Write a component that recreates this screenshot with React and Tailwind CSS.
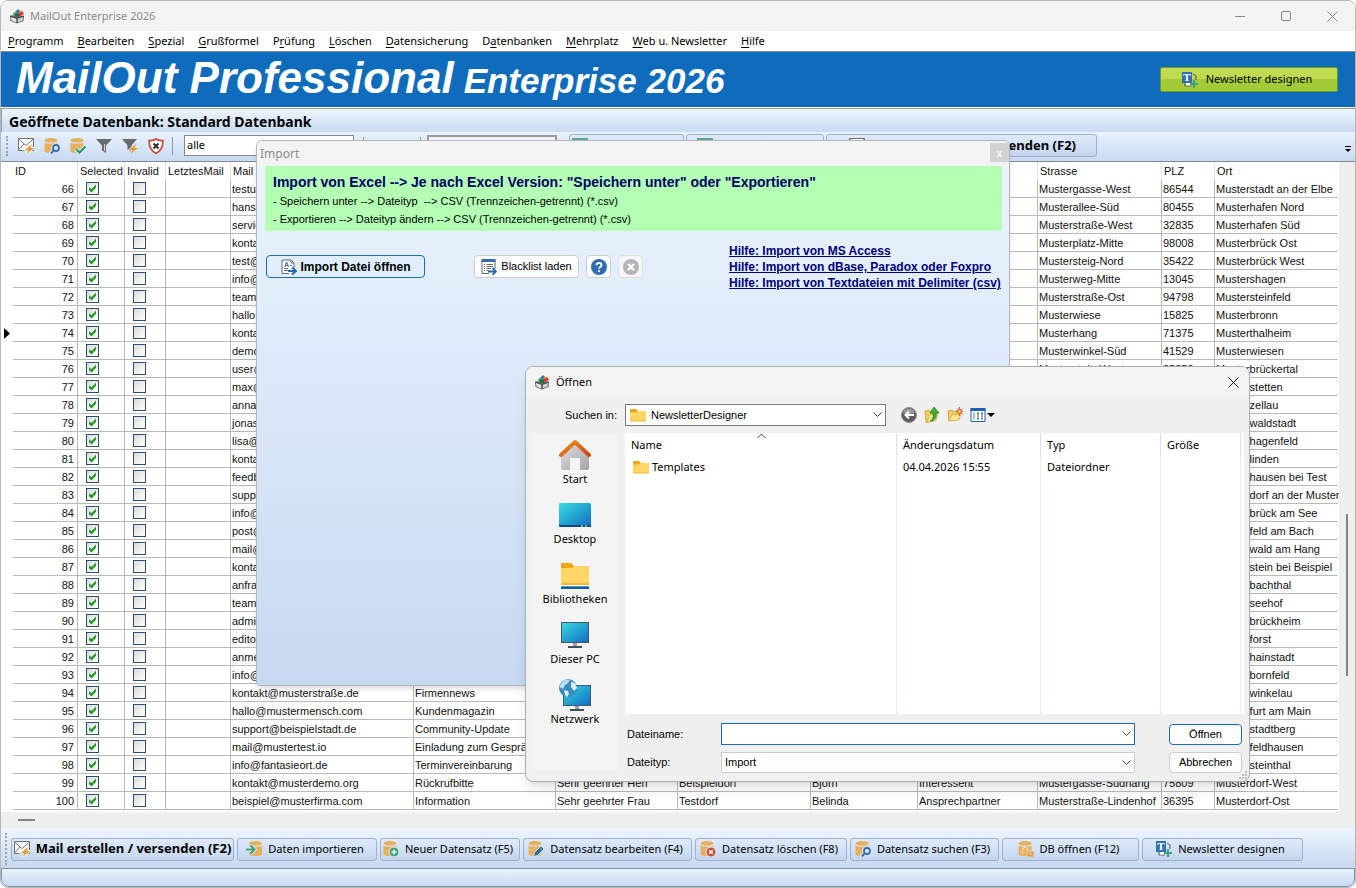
import { useState } from "react"
import clsx from "clsx"

// [text before the mnemonic, mnemonic, rest]
const menuItems = [
  ["", "P", "rogramm"],
  ["", "B", "earbeiten"],
  ["", "S", "pezial"],
  ["", "G", "rußformel"],
  ["P", "r", "üfung"],
  ["", "L", "öschen"],
  ["", "D", "atensicherung"],
  ["D", "a", "tenbanken"],
  ["", "M", "ehrplatz"],
  ["", "W", "eb u. Newsletter"],
  ["", "H", "ilfe"],
]

const columns = ["ID", "Selected", "Invalid", "LetztesMail", "Mail", "Betreff", "Anrede", "Firma", "Vorname", "Position", "Strasse", "PLZ", "Ort"]

const records = [
  { id: 66, mail: "testuser@muster.de", street: "Mustergasse-West", zip: "86544", city: "Musterstadt an der Elbe" },
  { id: 67, mail: "hans@muster.de", street: "Musterallee-Süd", zip: "80455", city: "Musterhafen Nord" },
  { id: 68, mail: "service@muster.de", street: "Musterstraße-West", zip: "32835", city: "Musterhafen Süd" },
  { id: 69, mail: "kontakt@muster.de", street: "Musterplatz-Mitte", zip: "98008", city: "Musterbrück Ost" },
  { id: 70, mail: "test@muster.de", street: "Mustersteig-Nord", zip: "35422", city: "Musterbrück West" },
  { id: 71, mail: "info@muster.de", street: "Musterweg-Mitte", zip: "13045", city: "Mustershagen" },
  { id: 72, mail: "team@muster.de", street: "Musterstraße-Ost", zip: "94798", city: "Mustersteinfeld" },
  { id: 73, mail: "hallo@muster.de", street: "Musterwiese", zip: "15825", city: "Musterbronn" },
  { id: 74, mail: "kontakt@muster.de", street: "Musterhang", zip: "71375", city: "Musterthalheim" },
  { id: 75, mail: "demo@muster.de", street: "Musterwinkel-Süd", zip: "41529", city: "Musterwiesen" },
  { id: 76, mail: "user@muster.de", street: "Mustersteig-West", zip: "85353", city: "Musterbrückertal" },
  { id: 77, mail: "max@muster.de", city: "Musterstetten" },
  { id: 78, mail: "anna@muster.de", city: "Musterzellau" },
  { id: 79, mail: "jonas@muster.de", city: "Musterwaldstadt" },
  { id: 80, mail: "lisa@muster.de", city: "Musterhagenfeld" },
  { id: 81, mail: "kontakt@muster.de", city: "Musterlinden" },
  { id: 82, mail: "feedback@muster.de", city: "Musterhausen bei Test" },
  { id: 83, mail: "support@muster.de", city: "Musterdorf an der Muster" },
  { id: 84, mail: "info@muster.de", city: "Musterbrück am See" },
  { id: 85, mail: "post@muster.de", city: "Musterfeld am Bach" },
  { id: 86, mail: "mail@muster.de", city: "Musterwald am Hang" },
  { id: 87, mail: "kontakt@muster.de", city: "Musterstein bei Beispiel" },
  { id: 88, mail: "anfrage@muster.de", city: "Musterbachthal" },
  { id: 89, mail: "team@muster.de", city: "Musterseehof" },
  { id: 90, mail: "admin@muster.de", city: "Musterbrückheim" },
  { id: 91, mail: "editor@muster.de", city: "Musterforst" },
  { id: 92, mail: "anmeldung@muster.de", city: "Musterhainstadt" },
  { id: 93, mail: "info@muster.de", city: "Musterbornfeld" },
  { id: 94, mail: "kontakt@musterstraße.de", subject: "Firmennews", city: "Musterwinkelau" },
  { id: 95, mail: "hallo@mustermensch.com", subject: "Kundenmagazin", city: "Musterfurt am Main" },
  { id: 96, mail: "support@beispielstadt.de", subject: "Community-Update", city: "Musterstadtberg" },
  { id: 97, mail: "mail@mustertest.io", subject: "Einladung zum Gespräch", city: "Musterfeldhausen" },
  { id: 98, mail: "info@fantasieort.de", subject: "Terminvereinbarung", city: "Mustersteinthal" },
  { id: 99, mail: "kontakt@musterdemo.org", subject: "Rückrufbitte", salutation: "Sehr geehrter Herr", company: "Beispieldorf", firstName: "Björn", position: "Interessent", street: "Mustergasse-Südhang", zip: "75809", city: "Musterdorf-West" },
  { id: 100, mail: "beispiel@musterfirma.com", subject: "Information", salutation: "Sehr geehrter Frau", company: "Testdorf", firstName: "Belinda", position: "Ansprechpartner", street: "Musterstraße-Lindenhof", zip: "36395", city: "Musterdorf-Ost" },
]

const currentRecord = 74

/* ---------- Icons ---------- */

function Svg({ size = 16, children }) {
  return (
    <svg width={size} height={size} viewBox={`0 0 ${size} ${size}`} fill="none" className="shrink-0" aria-hidden="true">
      {children}
    </svg>
  )
}

function BoxIcon() {
  return (
    <Svg>
      <path d="M6 4 9 1l2 2-3 4z" fill="#2b7bb9" />
      <path d="M4 5l3-1 1 3-3 1z" fill="#3aa655" />
      <path d="M9 5l4-2 2 3-5 3z" fill="#d8392b" />
      <path d="M10 2l3 1-2 2z" fill="#e8a427" />
      <path d="M6 6h4v3H6z" fill="#1d6b37" />
      <path d="M1 8l3-1 4 2.500 4-2 3 .5-.5 5L8 15.500 1.500 13z" fill="#6d6d6d" />
      <path d="M2 9l5.500 1.800v3.600L2.500 12.500z" fill="#e4e4e4" />
      <path d="M14 9l-5.500 1.800v3.600l5-1.900z" fill="#cfcfcf" />
      <path d="M1 8l7 2.200L15 8" stroke="#444" />
      <path d="M8 10v5" stroke="#444" />
    </Svg>
  )
}

const bolt = <path d="M14 6 7 12h3.500l-2.500 4.500 8-6.500h-3.500z" fill="#e59a2c" />

function MailBoltIcon() {
  return (
    <Svg>
      <path d="M.5 .5h15v12H.5z" fill="#fff" stroke="#707070" />
      <path d="M.5 1 8 7.500 15.500 1M.5 12l5.500-6" stroke="#707070" />
      <path d="M14 6 7 12h3.500l-2.500 4.500 8-6.500h-3.500z" stroke="#fff" strokeWidth="1.500" />
      {bolt}
    </Svg>
  )
}

function Database({ children }) {
  return (
    <Svg>
      <ellipse cx="7" cy="2.300" rx="6.500" ry="2.300" fill="#e6b05c" />
      <path d="M.5 4.500c2 1.600 11 1.600 13 0v9c-2 2-11 2-13 0z" fill="#e6b05c" />
      {children}
    </Svg>
  )
}

const DbSearchIcon = () => (
  <Database>
    <circle cx="11.500" cy="10" r="4.500" fill="#dfeafa" />
    <path d="M6 16l3-3" stroke="#dfeafa" strokeWidth="4" />
    <circle cx="12" cy="10" r="3" stroke="#356fb0" strokeWidth="1.800" />
    <path d="M9.800 12.200 7 15.500" stroke="#356fb0" strokeWidth="2" />
  </Database>
)

const DbCheckIcon = () => (
  <Database>
    <path d="M5.500 11l4 3.500L16 8" stroke="#dfeafa" strokeWidth="4.500" />
    <path d="M6 11l3.500 3.500L15.500 8.500" stroke="#259a63" strokeWidth="2.200" />
  </Database>
)

const DbImportIcon = () => (
  <Svg>
    <ellipse cx="9.500" cy="2.300" rx="6.500" ry="2.300" fill="#e6b05c" />
    <path d="M3 4.500c2 1.600 11 1.600 13 0v9c-2 2-11 2-13 0z" fill="#e6b05c" />
    <path d="M0 8.500h8M4.500 4.500l4 4-4 4" stroke="#dbe7f6" strokeWidth="4" />
    <path d="M0 8.500h8M4.500 4.500l4 4-4 4" stroke="#3fa37c" strokeWidth="2.200" />
  </Svg>
)

const DbAddIcon = () => (
  <Database>
    <circle cx="11" cy="11" r="5" fill="#3fa37c" stroke="#e6effa" />
    <path d="M11 8.500v5M8.500 11h5" stroke="#fff" strokeWidth="1.500" />
  </Database>
)

const DbEditIcon = () => (
  <Database>
    <path d="M5.500 15.500l1-4L13 5l3 3-6.500 6.500z" fill="#346ca8" stroke="#e6effa" strokeWidth=".8" />
    <path d="M12 7l2.500 2.500" stroke="#9cc0e4" strokeWidth=".7" />
  </Database>
)

const DbDeleteIcon = () => (
  <Database>
    <circle cx="11" cy="11" r="5" fill="#cf4a38" stroke="#e6effa" />
    <path d="M9.200 9.200l3.600 3.600M12.800 9.200l-3.600 3.600" stroke="#fff" strokeWidth="1.500" />
  </Database>
)

const DbOpenIcon = () => (
  <Database>
    <path d="M4.500 13V9a2.500 2.500 0 0 1 5 0v1" stroke="#f6ddb4" strokeWidth="1.200" />
    <path d="M9 10h7v6H9z" fill="#ee9a4d" stroke="#e6effa" strokeWidth=".6" />
    <path d="M12.500 11.500v2.500" stroke="#fff" />
  </Database>
)

const FunnelIcon = () => (
  <Svg>
    <path d="M0 1h16l-6 6.500V15L6 12.500v-5z" fill="#6b6b6b" />
    <path d="M8.500 6v7" stroke="#d5d5d5" />
  </Svg>
)

const FunnelBoltIcon = () => (
  <Svg>
    <path d="M0 1h15L9.500 7.500V14L5.500 12V7.500z" fill="#6b6b6b" />
    <path d="M14 6 7 12h3.500l-2.500 4.500 8-6.500h-3.500z" stroke="#dfeafa" strokeWidth="1.500" />
    {bolt}
  </Svg>
)

const ShieldIcon = () => (
  <Svg>
    <path d="M8 1c2 1.400 4.500 1.700 6.800 1.500C15.200 9 13 13 8 15.300 3 13 .8 9 1.200 2.500 3.500 2.700 6 2.400 8 1z" fill="#fff" stroke="#cf4a38" strokeWidth="1.700" />
    <path d="M5.500 5.500l5 5M10.500 5.500l-5 5" stroke="#2e2e2e" strokeWidth="2" />
  </Svg>
)

const NewsletterIcon = () => (
  <Svg>
    <path d="M3 11v3h6M11 2l3 2v4" stroke="#555" />
    <path d="M4 11h4v2.500H4z" fill="#fff" />
    <path d="M0 0h10v11H0z" fill="#356fb0" />
    <text x="5" y="9" textAnchor="middle" fill="#fff" fontSize="11" fontWeight="700" fontFamily="Liberation Serif, serif">T</text>
    <path d="M12 8v8M8 12h8" stroke="#3fa37c" strokeWidth="2.200" />
  </Svg>
)

const ImportFileIcon = () => (
  <Svg>
    <path d="M8 14.500H1V1h9l3 3v5" fill="#fff" stroke="#6b6b6b" />
    <path d="M10 1v3h3M3 9.500h4M3 11.500h4M9 6.500h2" stroke="#6b6b6b" />
    <text x="5.500" y="8" textAnchor="middle" fill="#356fb0" fontSize="7" fontWeight="700" fontFamily="Liberation Sans, sans-serif">A</text>
    <path d="M7 12h7M11 8.500l4 3.500-4 3.500" stroke="#2c6bb0" strokeWidth="2" />
  </Svg>
)

const BlacklistIcon = () => (
  <Svg>
    <path d="M1 1h13v9M8 14.500H1V1" fill="#fff" stroke="#6b6b6b" />
    <path d="M.5 0h14v3H.5z" fill="#356fb0" />
    <path d="M3 5.500h1M3 7.500h1M3 9.500h1M3 11.500h1M5.500 5.500H12M5.500 7.500H12M5.500 9.500H10M5.500 11.500H8" stroke="#6b6b6b" />
    <path d="M7 12.500h7M11.500 9l3.500 3.500-3.500 3.500" stroke="#2c6bb0" strokeWidth="1.800" />
  </Svg>
)

const HelpIcon = () => (
  <Svg>
    <circle cx="8" cy="8" r="8" fill="#2f6db0" />
    <path d="M5.500 6.200c0-3.200 5-3.200 5 0 0 1.900-2.400 1.800-2.400 3.600M8 11.200v1.800" stroke="#fff" strokeWidth="1.800" />
  </Svg>
)

const CancelIcon = () => (
  <Svg>
    <circle cx="8" cy="8" r="8" fill="#b5b5b5" />
    <path d="M5 5l6 6M11 5l-6 6" stroke="#fff" strokeWidth="2.400" />
  </Svg>
)

const FolderIcon = () => (
  <Svg>
    <path d="M0 3c0-.6.400-1 1-1h5l2 2h7c.6 0 1 .400 1 1v3H0z" fill="#e9a90f" />
    <path d="M0 5.500h6L8 4h7.200c.5 0 .8.300.8.800V13c0 .6-.4 1-1 1H1c-.6 0-1-.4-1-1z" fill="#ffd566" />
    <path d="M0 13c0 .6.400 1 1 1h14c.6 0 1-.4 1-1" stroke="#eeb530" />
  </Svg>
)

const BackIcon = () => (
  <Svg>
    <circle cx="8" cy="8" r="7.500" fill="#5d5d5d" stroke="#8f8f8f" />
    <path d="M2 6a6.300 6.300 0 0 1 12 0c-3 1.500-9 1.500-12 0z" fill="#9a9a9a" />
    <path d="M13 8H4.500M8 4.500 4.500 8 8 11.500" stroke="#fff" strokeWidth="2" />
  </Svg>
)

const UpIcon = () => (
  <Svg>
    <path d="M1 4l4-1 1 1.500 6-.5v9L2 15.500z" fill="#f0cf60" stroke="#c99a2e" strokeWidth=".8" />
    <path d="M3 15.500 5.500 8 14 6.500l-2 7z" fill="#fbe694" stroke="#c99a2e" strokeWidth=".6" />
    <path d="M6 14c3-1 3.500-4 3-8H6l4-6 5 6h-3c1 5-2 8-6 8z" fill="#3db12f" stroke="#1c7a1a" strokeWidth=".7" />
  </Svg>
)

const NewFolderIcon = () => (
  <Svg>
    <path d="M1 4l4-1 1.500 1.500L12 4v8L2 14z" fill="#f0cf60" stroke="#c99a2e" strokeWidth=".8" />
    <path d="M2 14 4.500 8 14 7l-2.500 6z" fill="#fbe694" stroke="#c99a2e" strokeWidth=".6" />
    <circle cx="12.500" cy="4.500" r="2" fill="#ffd34d" stroke="#e2562b" />
    <path d="M12.500 0v2M12.500 7v2M8.500 4.500h2M14.500 4.500h2M9.700 1.700l1.200 1.200M15.300 1.700l-1.200 1.200M15.300 7.300l-1.200-1.200" stroke="#e2562b" />
  </Svg>
)

const ViewIcon = () => (
  <Svg>
    <path d="M1 1.500h14v13H1z" fill="#fff" stroke="#1b62b5" />
    <path d="M.5 1h15v3H.5z" fill="#1b62b5" />
    <path d="M3 6.500h2M3 11.500h2" stroke="#8fb2d8" strokeWidth="2" />
    <path d="M7 6.500h2M7 11.500h2" stroke="#3c8a5a" strokeWidth="2" />
    <path d="M11 6.500h2" stroke="#3f6fb0" strokeWidth="2" />
    <path d="M11 11.500h2" stroke="#b0713a" strokeWidth="2" />
    <path d="M3 9h2M7 9h2M11 9h2" stroke="#555" />
  </Svg>
)

const StartIcon = () => (
  <Svg size={32}>
    <defs>
      <linearGradient id="house" x1="0" y1="0" x2="1" y2="1">
        <stop offset="0" stopColor="#e2e2e2" />
        <stop offset="1" stopColor="#a3a3a3" />
      </linearGradient>
      <linearGradient id="roof" x1="0" y1="0" x2="1" y2="1">
        <stop offset="0" stopColor="#f0921e" />
        <stop offset="1" stopColor="#cf4715" />
      </linearGradient>
    </defs>
    <path d="M2 15 16 3l14 12v14c0 1.200-.8 2-2 2h-6c-.6 0-1-.4-1-1V20a1 1 0 0 0-1-1h-8a1 1 0 0 0-1 1v10c0 .6-.4 1-1 1H4c-1.200 0-2-.8-2-2z" fill="url(#house)" />
    <path d="M2 16 16 3l14 13" stroke="url(#roof)" strokeWidth="4" strokeLinejoin="round" strokeLinecap="round" />
  </Svg>
)

const ScreenGradient = ({ id }) => (
  <linearGradient id={id} x1="0" y1="0" x2="1" y2="1">
    <stop offset="0" stopColor="#38dce4" />
    <stop offset="1" stopColor="#0f6cc0" />
  </linearGradient>
)

const DesktopIcon = () => (
  <Svg size={32}>
    <defs><ScreenGradient id="desktop" /></defs>
    <rect y="4" width="32" height="24" rx="1.500" fill="url(#desktop)" />
    <path d="M0 26h32v.500c0 .8-.7 1.500-1.500 1.500h-29C.7 28 0 27.300 0 26.500z" fill="#0c4a80" />
    <path d="M22 27h2M26 27h2" stroke="#fff" />
  </Svg>
)

const LibraryIcon = () => (
  <Svg size={32}>
    <path d="M2 5c0-.8.500-1 1-1h9l3 3v4H2z" fill="#f0a80e" />
    <path d="M2 9h11l2-2h14c.6 0 1 .400 1 1v18H2z" fill="#ffd566" />
    <path d="M2 25h28" stroke="#f6b92b" strokeWidth="2" />
    <path d="M2 27.500h28" stroke="#3ba2dc" />
    <path d="M2 29h28" stroke="#155a99" strokeWidth="2" />
  </Svg>
)

const ComputerIcon = () => (
  <Svg size={32}>
    <defs><ScreenGradient id="computer" /></defs>
    <rect x="2.500" y="3.500" width="27" height="20" fill="url(#computer)" stroke="#4a5660" />
    <path d="M14 24h4v3h-4z" fill="#9aa2a8" />
    <path d="M9 28h14" stroke="#454e56" strokeWidth="2" />
  </Svg>
)

const NetworkIcon = () => (
  <Svg size={32}>
    <defs><ScreenGradient id="network" /></defs>
    <rect x="4.500" y="6.500" width="27" height="20" fill="url(#network)" stroke="#3c5a70" />
    <path d="M16 27h4v3h-4z" fill="#9aa2a8" />
    <path d="M11 31h14" stroke="#454e56" strokeWidth="2" />
    <circle cx="9" cy="9" r="9" fill="#3a8bbd" />
    <path d="M3 3c3-3 6-2.500 8-2l-3 4-2 1-2 4-4-2z" fill="#b9dff0" />
    <path d="M5 11l4 1 1 3-2 3-2-2zM12 3l4 1 2 5-3 3-3-4z" fill="#d7eef7" />
  </Svg>
)

const Chevron = ({ className, up }) => (
  <svg width="9" height="6" viewBox="0 0 9 6" fill="none" className={clsx("pointer-events-none absolute", className)} aria-hidden="true">
    <path d={up ? "M.5 5l4-4 4 4" : "M.5 .5l4 4 4-4"} stroke="#444" />
  </svg>
)

const CloseLines = ({ color }) => (
  <svg width="11" height="11" viewBox="0 0 11 11" fill="none" aria-hidden="true">
    <path d="M.5 .5l10 10M10.500 .5l-10 10" stroke={color} />
  </svg>
)

/* ---------- Main window ---------- */

function TitleBar() {
  const control = "flex h-full w-[46px] items-center justify-center"

  return (
    <header className="flex h-[30px] items-center bg-[#f3f3f3] pl-2">
      <BoxIcon />
      <h1 className="ml-[5px] flex-1 text-[11px] text-[#8c8c8c]">MailOut Enterprise 2026</h1>
      <button aria-label="Minimieren" className={control}>
        <span className="h-px w-[10px] bg-[#8a8a8a]" />
      </button>
      <button aria-label="Maximieren" className={control}>
        <span className="size-[10px] rounded-xs border border-[#8a8a8a]" />
      </button>
      <button aria-label="Schließen" className={control}>
        <CloseLines color="#8a8a8a" />
      </button>
    </header>
  )
}

function MenuBar() {
  return (
    <nav className="flex h-[21px] items-center gap-[14px] border-b border-[#8e8e8e] bg-white pl-[7px] text-[11px] whitespace-nowrap">
      {menuItems.map(([before, key, rest]) => (
        <button key={rest}>
          {before}
          <span className="underline underline-offset-2">{key}</span>
          {rest}
        </button>
      ))}
    </nav>
  )
}

function Banner() {
  return (
    <div className="flex h-14 items-start justify-between border-b border-white bg-[#0f6cbd] pr-[17px]">
      <div className="flex items-baseline gap-2.5 pl-[15px] font-['Liberation_Sans',sans-serif] font-bold whitespace-nowrap text-white italic">
        <span className="text-[44px] leading-[52px]">MailOut Professional</span>
        <span className="text-[35px] leading-[52px]">Enterprise 2026</span>
      </div>
      <button className="mt-[15px] flex h-[25px] w-[178px] items-center justify-center gap-2 rounded-xs border border-[#6f9a1f] bg-linear-to-b from-[#bfdc50] from-50% to-[#a3cb37] to-50% pr-1 text-[11px]">
        <NewsletterIcon />
        Newsletter designen
      </button>
    </div>
  )
}

const Separator = () => <span className="h-[18px] w-px bg-[#8d97a5]" />

const toolIcons = [
  ["Mail erstellen", MailBoltIcon],
  ["Datensatz suchen", DbSearchIcon],
  ["Auswahl prüfen", DbCheckIcon],
  ["Filter", FunnelIcon],
  ["Schnellfilter", FunnelBoltIcon],
  ["Ungültige", ShieldIcon],
]

const toolButton = "flex h-[23px] items-center rounded-[3px] border border-[#9fb0c9] bg-linear-to-b from-[#dfeafa] to-[#c3d6ef] whitespace-nowrap"

function TopToolbar() {
  return (
    <div className="flex h-[30px] items-center border-b border-[#7f8998] bg-linear-to-b from-[#e8f2fd] to-[#c8daf1] pb-0.5 pl-[5px]">
      <span className="h-5 border-l-2 border-dotted border-[#9aa3b0]" />
      <div className="ml-2.5 flex gap-2.5">
        {toolIcons.map(([label, Icon]) => (
          <button key={label} aria-label={label}>
            <Icon />
          </button>
        ))}
      </div>
      <div className="ml-2 flex items-center gap-[11px]">
        <Separator />
        <select aria-label="Auswahl" defaultValue="alle" className="h-[21px] w-[170px] appearance-none border border-[#8a8a8a] bg-white px-0.5 text-[11px]">
          <option>alle</option>
        </select>
      </div>
      <div className="ml-[9px] flex items-center gap-2.5">
        <Separator />
        <button aria-label="Vorheriger" className="h-3 w-[13px] bg-[#3d5f96]" />
        <button aria-label="Nächster" className="h-3 w-[13px] bg-[#3d5f96]" />
        <Separator />
      </div>
      <div className="ml-1.5 h-[21px] w-[130px] border-2 border-[#9b9b9b] bg-[#eef4fc]" />
      <div className="ml-3 flex gap-0.5">
        <button aria-label="Excel Export" className={clsx(toolButton, "w-[115px] pl-0.5")}>
          <span className="size-4 bg-[#5fa98a]" />
        </button>
        <button aria-label="Excel Import" className={clsx(toolButton, "w-[138px] pl-2.5")}>
          <span className="size-4 bg-[#5fa98a]" />
        </button>
        <button className={clsx(toolButton, "w-[271px] justify-end gap-1 pr-5 text-[13px] font-bold")}>
          <MailBoltIcon />
          E-Mail erstellen / versenden (F2)
        </button>
      </div>
      <button aria-label="Weitere Schaltflächen" className="mt-1.5 mr-1 ml-auto flex flex-col items-center gap-0.5">
        <span className="h-px w-[6px] bg-black" />
        <span className="border-x-3 border-t-3 border-x-transparent border-t-black" />
      </button>
    </div>
  )
}

function GridCheckbox({ label, defaultChecked }) {
  return (
    <input
      type="checkbox"
      aria-label={label}
      defaultChecked={defaultChecked}
      className="ml-[7px] block size-[13px] appearance-none border border-[#2c4f78] bg-linear-to-br from-[#dcdcd6] to-white checked:before:block checked:before:size-[11px] checked:before:bg-[#2a9a2f] checked:before:[clip-path:polygon(18%_38%,42%_55%,82%_14%,82%_44%,42%_86%,18%_66%)]"
    />
  )
}

function RecordGrid() {
  const cell = "h-[18px] border-b border-[#b9b9b9] p-0 pl-px"
  const line = "overflow-hidden border-r border-r-[#b9b9b9]"

  return (
    <table className="w-full table-fixed border-separate border-spacing-0 text-left font-['Liberation_Sans',sans-serif] text-[11px] leading-[16px] whitespace-nowrap text-[#111]">
      <colgroup>
        <col className="w-3" />
        <col className="w-[65px]" />
        <col className="w-[47px]" />
        <col className="w-[41px]" />
        <col className="w-[65px]" />
        <col className="w-[183px]" />
        <col className="w-[142px]" />
        <col className="w-[122px]" />
        <col className="w-[133px]" />
        <col className="w-[107px]" />
        <col className="w-[120px]" />
        <col className="w-[124px]" />
        <col className="w-[53px]" />
        <col />
      </colgroup>
      <thead>
        <tr>
          <td className="h-[18px] p-0" />
          {columns.map((name) => (
            <th key={name} scope="col" className="h-[18px] border-r border-[#e2e2e2] p-0 pl-0.5 font-normal last:border-r-0">
              {name}
            </th>
          ))}
        </tr>
      </thead>
      <tbody>
        {records.map((r) => (
          <tr key={r.id}>
            <td className="p-0 pl-[3px]">
              {r.id === currentRecord && (
                <svg width="6" height="11" viewBox="0 0 6 11" className="block" aria-label="Aktueller Datensatz">
                  <path d="M0 0l6 5.500L0 11z" fill="#000" />
                </svg>
              )}
            </td>
            <td className={clsx(cell, line, "pr-[3px] text-right")}>{r.id}</td>
            <td className={clsx(cell, line)}>
              <GridCheckbox label={`Selected ${r.id}`} defaultChecked />
            </td>
            <td className={clsx(cell, line)}>
              <GridCheckbox label={`Invalid ${r.id}`} />
            </td>
            <td className={clsx(cell, line)} />
            <td className={clsx(cell, line)}>{r.mail}</td>
            <td className={clsx(cell, line)}>{r.subject}</td>
            <td className={clsx(cell, line)}>{r.salutation}</td>
            <td className={clsx(cell, line)}>{r.company}</td>
            <td className={clsx(cell, line)}>{r.firstName}</td>
            <td className={clsx(cell, line)}>{r.position}</td>
            <td className={clsx(cell, line)}>{r.street}</td>
            <td className={clsx(cell, line)}>{r.zip}</td>
            <td className={cell}>{r.city}</td>
          </tr>
        ))}
      </tbody>
    </table>
  )
}

function BottomToolbar() {
  const button = clsx(toolButton, "justify-center gap-1.5 pr-1")

  return (
    <div className="flex h-10 items-center bg-linear-to-b from-[#eef5fe] to-[#c6d8f0] pt-0.5 pl-1 text-[11px]">
      <span className="h-8 border-l-2 border-dotted border-[#9aa3b0]" />
      <div className="ml-1 flex gap-[3px]">
        <button className={clsx(toolButton, "w-[223px] justify-center gap-1.5 text-[13px] font-bold")}><MailBoltIcon />Mail erstellen / versenden (F2)</button>
        <button className={clsx(button, "w-[140px]")}><DbImportIcon />Daten importieren</button>
        <button className={clsx(button, "w-[140px]")}><DbAddIcon />Neuer Datensatz (F5)</button>
        <button className={clsx(button, "w-[169px]")}><DbEditIcon />Datensatz bearbeiten (F4)</button>
        <button className={clsx(button, "w-[152px]")}><DbDeleteIcon />Datensatz löschen (F8)</button>
        <button className={clsx(button, "w-[149px]")}><DbSearchIcon />Datensatz suchen (F3)</button>
        <button className={clsx(button, "w-[137px]")}><DbOpenIcon />DB öffnen (F12)</button>
        <button className={clsx(button, "w-[161px]")}><NewsletterIcon />Newsletter designen</button>
      </div>
    </div>
  )
}

/* ---------- Import window ---------- */

const helpLinks = [
  "Hilfe: Import von MS Access",
  "Hilfe: Import von dBase, Paradox oder Foxpro",
  "Hilfe: Import von Textdateien mit Delimiter (csv)",
]

function ImportWindow() {
  const button = "mt-6 flex h-[23px] items-center justify-center rounded-sm border"

  return (
    <section className="absolute top-[139px] left-[255px] flex h-[546px] w-[754px] flex-col overflow-hidden rounded-t-md rounded-b-sm border border-[#b4b8be] bg-linear-to-b from-[#edf5fe] to-[#c6d9f1] shadow-md">
      <header className="flex h-[25px] shrink-0 items-start justify-between bg-[#f3f3f3] pl-[3px]">
        <h2 className="text-[12px] leading-[25px] text-[#8c8c8c]">Import</h2>
        <button aria-label="Import schließen" className="mt-0.5 size-[19px] bg-[#d2d2d2] text-[10px] leading-[16px] font-bold text-[#f3f3f3]">
          x
        </button>
      </header>
      <div className="flex-1 pr-[7px] pl-2 font-['Liberation_Sans',sans-serif] text-[11px] text-black">
        <div className="bg-[#b3ffb3] pt-[7px] pb-[3px] pl-2 leading-[18px] whitespace-pre">
          <h3 className="mb-px text-[14px] font-bold text-[#000066]">{'Import von Excel --> Je nach Excel Version: "Speichern unter" oder "Exportieren"'}</h3>
          <p>{"- Speichern unter --> Dateityp  --> CSV (Trennzeichen-getrennt) (*.csv)"}</p>
          <p>{"- Exportieren --> Dateityp ändern --> CSV (Trennzeichen-getrennt) (*.csv)"}</p>
        </div>
        <div className="flex items-start pl-px whitespace-nowrap">
          <button className={clsx(button, "w-[159px] gap-1 border-[#1a6db5] bg-[#dfeefa] text-[12px] font-bold")}>
            <ImportFileIcon />
            Import Datei öffnen
          </button>
          <button className={clsx(button, "ml-[49px] w-[105px] gap-1 border-[#cdcdcd] bg-[#fdfdfd]")}>
            <BlacklistIcon />
            Blacklist laden
          </button>
          <button aria-label="Hilfe" className={clsx(button, "ml-[7px] w-[25px] border-[#cdcdcd] bg-[#fdfdfd]")}>
            <HelpIcon />
          </button>
          <button aria-label="Abbruch" disabled className={clsx(button, "ml-[7px] w-[25px] border-[#e0e0e0] bg-[#f3f5f8]")}>
            <CancelIcon />
          </button>
          <div className="mt-3 ml-[86px] flex flex-col items-start text-[12px] leading-[16px] font-bold">
            {helpLinks.map((text) => (
              <a key={text} href="#hilfe" className="text-[#00007a] underline">
                {text}
              </a>
            ))}
          </div>
        </div>
      </div>
    </section>
  )
}

/* ---------- File dialog ---------- */

const places = [
  ["Start", StartIcon],
  ["Desktop", DesktopIcon],
  ["Bibliotheken", LibraryIcon],
  ["Dieser PC", ComputerIcon],
  ["Netzwerk", NetworkIcon],
]

function FileDialog() {
  const [fileName, setFileName] = useState("")
  const head = "h-6 border-r border-[#dfdfdf] p-0 pl-1.5 text-left font-normal"
  const body = "h-5 border-r border-[#e6eff8] p-0 pl-1.5"

  return (
    <section className="absolute top-[365px] left-[524px] flex w-[725px] flex-col overflow-hidden rounded-lg border border-[#aab0b8] bg-[#f0f0f0] font-['Liberation_Sans',sans-serif] text-[11px] shadow-lg">
      <header className="flex h-[30px] items-center bg-[#f3f3f3] pl-2 font-['Noto_Sans',sans-serif]">
        <BoxIcon />
        <h2 className="ml-1.5 flex-1">Öffnen</h2>
        <button aria-label="Dialog schließen" className="mr-2.5">
          <CloseLines color="#1a1a1a" />
        </button>
      </header>

      <div className="flex h-9 items-center">
        <label htmlFor="folder" className="w-[91px] text-right">Suchen in:</label>
        <div className="relative ml-2 flex w-[261px] items-center">
          <span className="absolute left-[5px]"><FolderIcon /></span>
          <select id="folder" className="h-[22px] w-full appearance-none border border-[#7a7a7a] bg-white pl-[25px]">
            <option>NewsletterDesigner</option>
          </select>
          <Chevron className="right-1" />
        </div>
        <div className="ml-[15px] flex items-center gap-[7px]">
          <button aria-label="Zurück"><BackIcon /></button>
          <button aria-label="Übergeordneter Ordner"><UpIcon /></button>
          <button aria-label="Neuer Ordner"><NewFolderIcon /></button>
          <button aria-label="Ansicht" className="flex items-center">
            <ViewIcon />
            <span className="ml-px border-x-4 border-t-4 border-x-transparent border-t-black" />
          </button>
        </div>
      </div>

      <div className="flex gap-1.5 pr-[5px] pl-1.5">
        <div className="mb-3 flex w-[87px] flex-col gap-3 bg-[#f4f4f4] pt-1.5 font-['Noto_Sans',sans-serif]">
          {places.map(([name, Icon]) => (
            <button key={name} className="flex flex-col items-center pr-px leading-[16px]">
              <Icon />
              {name}
            </button>
          ))}
        </div>

        <div className="flex flex-1 flex-col">
          <div className="relative h-[281px] bg-white font-['Noto_Sans',sans-serif]">
            <table className="h-full w-full table-fixed border-separate border-spacing-0">
              <colgroup>
                <col className="w-[272px]" />
                <col className="w-[144px]" />
                <col className="w-[120px]" />
                <col className="w-[80px]" />
                <col />
              </colgroup>
              <thead>
                <tr>
                  <th className={head}>Name</th>
                  <th className={head}>Änderungsdatum</th>
                  <th className={head}>Typ</th>
                  <th className={head}>Größe</th>
                  <td />
                </tr>
              </thead>
              <tbody>
                <tr>
                  <td className={body}>
                    <span className="flex items-center gap-[3px] pl-0.5"><FolderIcon />Templates</span>
                  </td>
                  <td className={body}>04.04.2026 15:55</td>
                  <td className={body}>Dateiordner</td>
                  <td className={body} />
                  <td />
                </tr>
                <tr className="h-full">
                  <td className={body} />
                  <td className={body} />
                  <td className={body} />
                  <td className={body} />
                  <td />
                </tr>
              </tbody>
            </table>
            <Chevron up className="top-0 left-[132px]" />
          </div>

          <div className="mt-[9px] mr-0.5 mb-2 grid grid-cols-[94px_1fr_73px] items-center gap-x-0.5 gap-y-[7px]">
            <label htmlFor="fileName" className="pl-0.5">Dateiname:</label>
            <div className="relative mr-8 flex items-center">
              <input
                id="fileName"
                value={fileName}
                onChange={(e) => setFileName(e.target.value)}
                className="h-[22px] w-full border border-[#1a6db5] bg-white px-1 outline-none"
              />
              <Chevron className="right-1" />
            </div>
            <button className="h-[21px] rounded-sm border border-[#1a6db5] bg-[#fdfdfd]">Öffnen</button>
            <label htmlFor="fileType" className="pl-0.5">Dateityp:</label>
            <div className="relative mr-8 flex items-center">
              <select id="fileType" className="h-[21px] w-full appearance-none border border-[#cdcdcd] bg-[#fdfdfd] px-[3px]">
                <option>Import</option>
              </select>
              <Chevron className="right-1" />
            </div>
            <button className="h-[21px] rounded-sm border border-[#cdcdcd] bg-[#fdfdfd]">Abbrechen</button>
          </div>
        </div>
      </div>

      <svg width="8" height="8" viewBox="0 0 8 8" className="absolute right-0.5 bottom-0.5" aria-hidden="true">
        <path d="M6 0h2v2H6zM3 3h2v2H3zM6 3h2v2H6zM0 6h2v2H0zM3 6h2v2H3zM6 6h2v2H6z" fill="#bdbdbd" />
      </svg>
    </section>
  )
}

export default function App() {
  return (
    <main className="relative flex min-h-screen flex-col overflow-hidden rounded-lg border border-[#b8b8b8] bg-white font-['Noto_Sans',sans-serif] text-black">
      <TitleBar />
      <MenuBar />
      <Banner />
      <div className="h-6 border-t border-l border-[#8e9bab] bg-linear-to-b from-[#eef5fe] to-[#c9dbf2] pl-[7px] text-[14px] leading-[25px] font-bold">
        Geöffnete Datenbank: Standard Datenbank
      </div>
      <TopToolbar />
      <div className="flex">
        <div className="flex-1 pr-px pb-0.5">
          <RecordGrid />
        </div>
        <div className="w-4 bg-[#efefef]">
          <div className="mt-[352px] ml-[7px] h-[162px] w-0.5 bg-[#858585]" />
        </div>
      </div>
      <div className="flex h-4 items-center bg-[#efefef] pl-[17px]">
        <div className="h-0.5 w-[17px] bg-[#858585]" />
      </div>
      <BottomToolbar />
      <footer className="flex-1 rounded-b-lg border border-[#7f93b0] bg-linear-to-b from-[#e9f2fc] to-[#c9dbf2] pt-[17px]" />

      <ImportWindow />
      <FileDialog />
    </main>
  )
}
